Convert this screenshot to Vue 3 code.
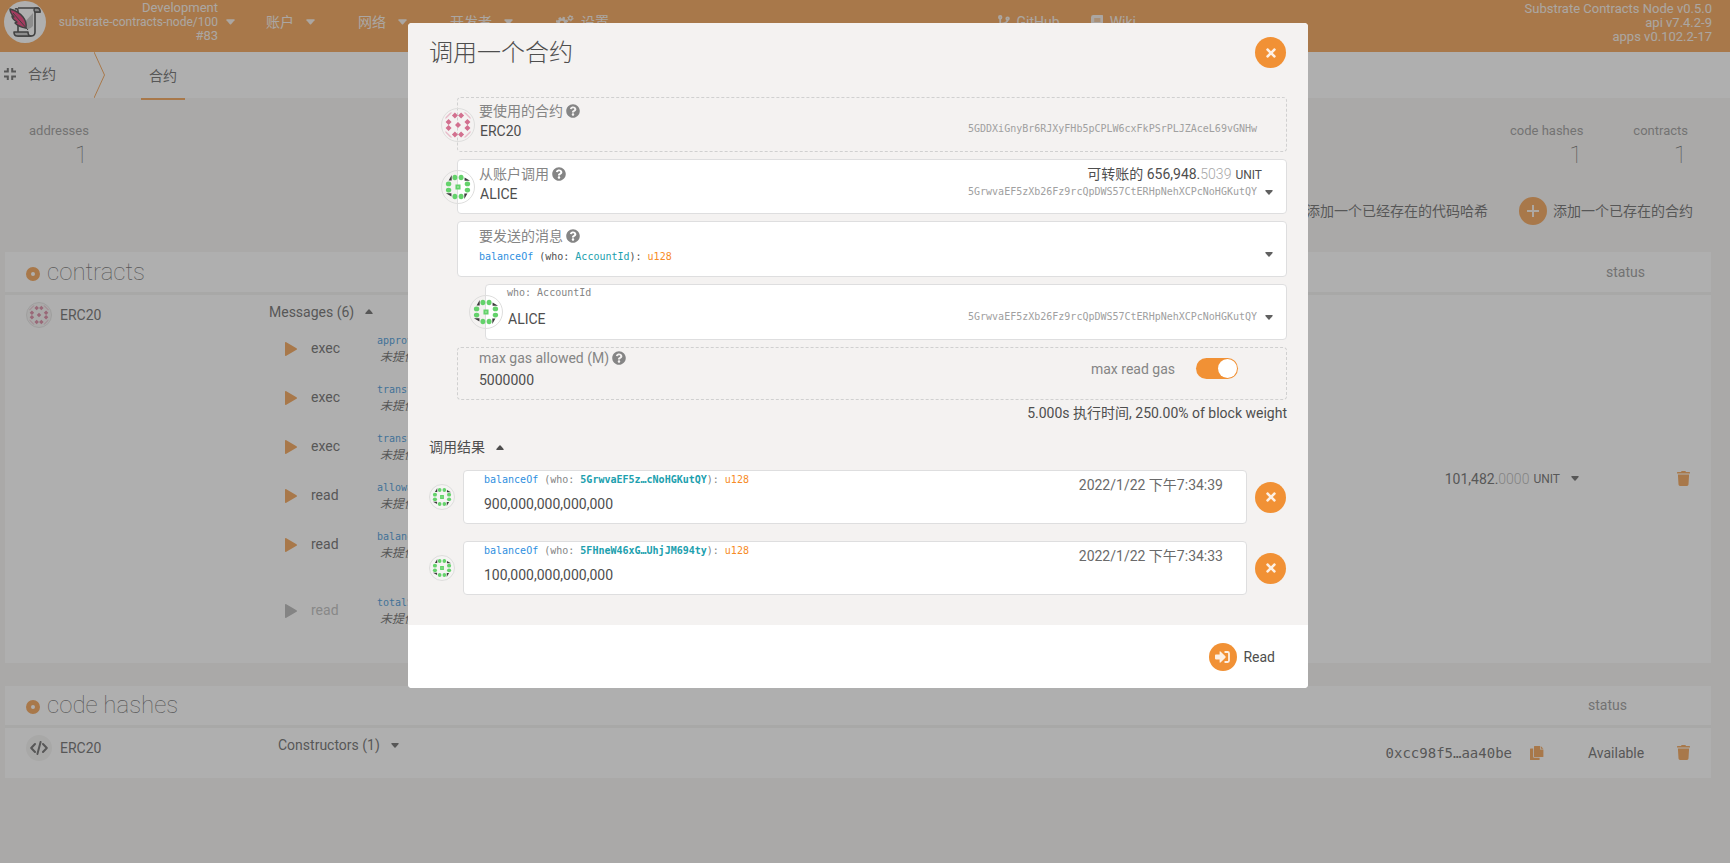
<script setup>
import { ref } from 'vue'

const navItems = ['账户', '网络', '开发者']
const messages = [
  { kind: 'exec', name: 'approve' },
  { kind: 'exec', name: 'transfer' },
  { kind: 'exec', name: 'transferFrom' },
  { kind: 'read', name: 'allowance' },
  { kind: 'read', name: 'balanceOf' },
  { kind: 'read', name: 'totalSupply', disabled: true }
]
const results = [
  { who: '5GrwvaEF5z…cNoHGKutQY', value: '900,000,000,000,000', when: '2022/1/22 下午7:34:39' },
  { who: '5FHneW46xG…UhjJM694ty', value: '100,000,000,000,000', when: '2022/1/22 下午7:34:33' }
]
const aliceAddress = '5GrwvaEF5zXb26Fz9rcQpDWS57CtERHpNehXCPcNoHGKutQY'
const contractAddress = '5GDDXiGnyBr6RJXyFHb5pCPLW6cxFkPSrPLJZAceL69vGNHw'
const maxGas = ref('5000000')
const useMaxGas = ref(true)
</script>

<template>
  <div class="app">
    <svg class="sprite" aria-hidden="true">
      <symbol id="caret-down" viewBox="0 0 10 6"><path d="M1 0h8q1 0 .5 1L5.7 5.5q-.7.7-1.4 0L.5 1Q0 0 1 0z" /></symbol>
      <symbol id="caret-up" viewBox="0 0 10 6"><path d="M1 6h8q1 0 .5-1L5.7.5Q5 -.2 4.3.5L.5 5Q0 6 1 6z" /></symbol>
      <symbol id="times" viewBox="0 0 352 512"><path d="M242.72 256l100.07-100.07c12.28-12.28 12.28-32.19 0-44.48l-22.24-22.24c-12.28-12.28-32.19-12.28-44.48 0L176 189.28 75.93 89.21c-12.28-12.28-32.19-12.28-44.48 0L9.21 111.45c-12.28 12.28-12.28 32.19 0 44.48L109.28 256 9.21 356.07c-12.28 12.28-12.28 32.19 0 44.48l22.24 22.24c12.28 12.28 32.2 12.28 44.48 0L176 322.72l100.07 100.07c12.28 12.28 32.2 12.28 44.48 0l22.24-22.24c12.28-12.28 12.28-32.19 0-44.48L242.72 256z" /></symbol>
      <symbol id="question" viewBox="0 0 512 512"><path d="M504 256c0 136.997-111.043 248-248 248S8 392.997 8 256C8 119.083 119.043 8 256 8s248 111.083 248 248zM262.655 90c-54.497 0-89.255 22.957-116.549 63.758-3.536 5.286-2.353 12.415 2.715 16.258l34.699 26.31c5.205 3.947 12.621 3.008 16.665-2.122 17.864-22.658 30.113-35.797 57.303-35.797 20.429 0 45.698 13.148 45.698 32.958 0 14.976-12.363 22.667-32.534 33.976C247.128 238.528 216 254.941 216 296v4c0 6.627 5.373 12 12 12h56c6.627 0 12-5.373 12-12v-1.333c0-28.462 83.186-29.647 83.186-106.667 0-58.002-60.165-102-116.531-102zM256 338c-25.365 0-46 20.635-46 46 0 25.364 20.635 46 46 46s46-20.636 46-46c0-25.365-20.635-46-46-46z" /></symbol>
      <symbol id="trash" viewBox="0 0 13 15"><path d="M0 1.6Q0 1 .6 1H4L4.6 0H8.4L9 1H12.4Q13 1 13 1.6V2.6H0zM.9 3.6H12.1L11.5 13.6Q11.4 15 10 15H3Q1.6 15 1.5 13.6z" /></symbol>
      <symbol id="play" viewBox="0 0 12 14"><path d="M0 1Q0-.4 1.3.3L11.5 6.2Q12.5 7 11.5 7.8L1.3 13.7Q0 14.4 0 13z" /></symbol>
      <symbol id="copy" viewBox="0 0 14 14"><path d="M4.6 0H10V3.4H13.4V10.4Q13.4 11 12.8 11H4.6Q4 11 4 10.4V.6Q4 0 4.6 0zM10.7 0L13.4 2.7H10.7zM3.2 2.6V11Q3.2 11.8 4 11.8H9.6V13.4Q9.6 14 9 14H.6Q0 14 0 13.4V3.2Q0 2.6.6 2.6z" /></symbol>
      <symbol id="code" viewBox="0 0 18 14"><path d="M5 3L1.2 7L5 11M13 3L16.8 7L13 11M10.6 1L7.4 13" fill="none" stroke="currentColor" stroke-width="2" stroke-linecap="round" stroke-linejoin="round" /></symbol>
      <symbol id="sign-in" viewBox="0 0 16 14"><path d="M0 5.4Q0 4.6.8 4.6H4.6V2Q4.6.8 5.5 1.6L10.4 6.3Q11 7 10.4 7.7L5.5 12.4Q4.6 13.2 4.6 12V9.4H.8Q0 9.4 0 8.6z" /><path d="M10.2 2H12.6Q14 2 14 3.4V10.6Q14 12 12.6 12H10.2" fill="none" stroke="currentColor" stroke-width="1.8" stroke-linecap="round" /></symbol>
      <symbol id="branch" viewBox="0 0 12 14"><g fill="none" stroke="currentColor" stroke-width="1.8"><circle cx="2.2" cy="2.2" r="1.3" /><circle cx="9.6" cy="3.6" r="1.3" /><circle cx="2.2" cy="11.8" r="1.3" /><path d="M2.2 3.5V10.5M9.6 5Q9.6 8 2.4 9" /></g></symbol>
      <symbol id="book" viewBox="0 0 12 14"><path fill-rule="evenodd" d="M2.4 0H11.3Q12 0 12 .7V9.6L11.4 10.4V12.4H12V14H2.4Q0 14 0 11.6V2.4Q0 0 2.4 0zM3.2 3.4V4.4H9.4V3.4zM3.2 5.4V6.4H9.4V5.4zM2.4 10.6Q1.6 11.5 2.4 12.4H10.2V10.6z" /></symbol>
      <symbol id="gears" viewBox="0 0 18 15"><g fill="none" stroke="currentColor"><circle cx="6" cy="8" r="3.5" stroke-width="2.6" /><circle cx="6" cy="8" r="5.3" stroke-width="1.8" stroke-dasharray="2.4 1.76" /><circle cx="14.4" cy="3.2" r="1.8" stroke-width="1.3" /><circle cx="14.4" cy="3.2" r="2.7" stroke-width="1" stroke-dasharray="1.4 1.4" /><circle cx="14.4" cy="12" r="1.8" stroke-width="1.3" /><circle cx="14.4" cy="12" r="2.7" stroke-width="1" stroke-dasharray="1.4 1.4" /></g></symbol>
      <symbol id="compress" viewBox="0 0 12 12"><path d="M0 3.6H3.8V0M8.2 0V3.6H12M12 8.4H8.2V12M3.8 12V8.4H0" fill="none" stroke="currentColor" stroke-width="2" /></symbol>
      <symbol id="alice" viewBox="-17 -17 34 34">
        <g id="alice-side">
          <path d="M-6.7 -12.8V-7H-10z" fill="#3c3c3c" />
          <ellipse cx="-3.3" cy="-10" rx="2.6" ry="2.9" fill="#64d26b" />
          <ellipse cx="3.3" cy="-10" rx="2.6" ry="2.9" fill="#64d26b" />
        </g>
        <use href="#alice-side" transform="rotate(90)" />
        <use href="#alice-side" transform="rotate(180)" />
        <use href="#alice-side" transform="rotate(270)" />
        <path d="M-1.7-1.7H1.7V1.7H-1.7z" fill="#b2e8b5" stroke="#64d26b" stroke-width="2" />
      </symbol>
      <symbol id="erc" viewBox="-17 -17 34 34">
        <g id="erc-side" fill="#d2708f">
          <path d="M-13.3-8.2L-8.2-13.3H-6L-13.3-6z" fill="#e8bcca" />
          <path d="M-3.3-13.2L-.1-10L-3.3-6.8L-6.5-10zM3.3-13.2L6.5-10L3.3-6.8L.1-10z" />
        </g>
        <use href="#erc-side" transform="rotate(90)" />
        <use href="#erc-side" transform="rotate(180)" />
        <use href="#erc-side" transform="rotate(270)" />
        <path d="M0-3.2L3.2 0L0 3.2L-3.2 0z" fill="#d2708f" />
      </symbol>
    </svg>

    <header class="topbar">
      <button class="chain" type="button">
        <svg class="logo" viewBox="0 0 42 42" aria-hidden="true">
          <circle cx="21" cy="21" r="21" fill="#fff" />
          <path d="M14 7H33Q36 7 36 11H31V31Q31 35 27 35H14V10Q14 7 11 8" fill="#fff" stroke="#222" stroke-width="1.6" stroke-linejoin="round" />
          <path d="M10 31H24Q24 35 27 35H13Q10 35 10 31z" fill="#bbb" stroke="#222" stroke-width="1.6" stroke-linejoin="round" />
          <path d="M31 7Q29 9 31 11H36Q36 7 33 7z" fill="#aaa" stroke="#222" stroke-width="1.4" />
          <path d="M18 24L29 12V25Q25 30 20 27z" fill="#bbb" />
          <path d="M6 8Q14 10 19 16Q23 21 22 27Q15 26 11 22L13 21Q8 18 8 15L10 16Q6 12 6 8z" fill="#e6165f" stroke="#222" stroke-width="1.4" stroke-linejoin="round" />
          <path d="M9 12L24 29" stroke="#222" stroke-width="1" />
        </svg>
        <span class="chain-text"><span>Development</span><span class="spec">substrate-contracts-node/100</span><span>#83</span></span>
        <svg class="caret" aria-hidden="true"><use href="#caret-down" /></svg>
      </button>
      <nav class="menu">
        <button v-for="item in navItems" :key="item" type="button">{{ item }}<svg class="caret" aria-hidden="true"><use href="#caret-down" /></svg></button>
        <a href="#settings"><svg class="gears" aria-hidden="true"><use href="#gears" /></svg>设置</a>
      </nav>
      <nav class="links">
        <a href="#github"><svg class="small-icon" aria-hidden="true"><use href="#branch" /></svg>GitHub</a>
        <a href="#wiki"><svg class="small-icon" aria-hidden="true"><use href="#book" /></svg>Wiki</a>
      </nav>
      <div class="versions"><span>Substrate Contracts Node v0.5.0</span><span>api v7.4.2-9</span><span>apps v0.102.2-17</span></div>
    </header>

    <nav class="tabs">
      <span class="section"><svg class="compress" aria-hidden="true"><use href="#compress" /></svg>合约</span>
      <svg class="divider" viewBox="0 0 11 46" aria-hidden="true"><path d="M0 0L10.5 23L0 46" /></svg>
      <a class="tab" href="#contracts">合约</a>
    </nav>

    <main>
      <section class="summary">
        <dl><dt>addresses</dt><dd>1</dd></dl>
        <div class="summary-right">
          <dl><dt>code hashes</dt><dd>1</dd></dl>
          <dl><dt>contracts</dt><dd>1</dd></dl>
        </div>
      </section>

      <div class="actions">
        <button class="action" type="button"><span class="round plus"></span>添加一个已经存在的代码哈希</button>
        <button class="action" type="button"><span class="round plus"></span>添加一个已存在的合约</button>
      </div>

      <table class="panel contracts">
        <colgroup><col class="c-name"><col><col class="c-value"><col class="c-status"><col class="c-act"></colgroup>
        <thead>
          <tr><th colspan="3"><h1>contracts</h1></th><th class="status">status</th><td></td></tr>
        </thead>
        <tbody>
          <tr>
            <td class="top"><div class="name"><svg class="ident" aria-hidden="true"><use href="#erc" /></svg>ERC20</div></td>
            <td class="top">
              <button class="expander" type="button">Messages (6)<svg class="caret" aria-hidden="true"><use href="#caret-up" /></svg></button>
              <ul class="messages">
                <li v-for="m in messages" :key="m.name" :class="{ off: m.disabled }">
                  <button type="button" class="run" :disabled="m.disabled"><svg class="play" aria-hidden="true"><use href="#play" /></svg>{{ m.kind }}</button>
                  <div class="doc"><code>{{ m.name }}</code><i>未提供文档</i></div>
                </li>
              </ul>
            </td>
            <td><div class="balance">101,482.<span class="faint">0000</span><small>UNIT</small><svg class="caret" aria-hidden="true"><use href="#caret-down" /></svg></div></td>
            <td></td>
            <td><button class="icon" type="button" aria-label="Forget contract"><svg class="trash" aria-hidden="true"><use href="#trash" /></svg></button></td>
          </tr>
        </tbody>
      </table>

      <table class="panel hashes">
        <colgroup><col class="c-name"><col><col class="c-value"><col class="c-status"><col class="c-act"></colgroup>
        <thead>
          <tr><th colspan="3"><h1>code hashes</h1></th><th>status</th><td></td></tr>
        </thead>
        <tbody>
          <tr>
            <td class="top"><div class="name"><span class="code-badge"><svg class="code" aria-hidden="true"><use href="#code" /></svg></span>ERC20</div></td>
            <td class="top"><button class="expander" type="button">Constructors (1)<svg class="caret" aria-hidden="true"><use href="#caret-down" /></svg></button></td>
            <td><div class="hash">0xcc98f5…aa40be<button class="icon" type="button" aria-label="Copy hash"><svg class="copy" aria-hidden="true"><use href="#copy" /></svg></button></div></td>
            <td>Available</td>
            <td><button class="icon" type="button" aria-label="Forget code"><svg class="trash" aria-hidden="true"><use href="#trash" /></svg></button></td>
          </tr>
        </tbody>
      </table>
    </main>

    <div class="overlay">
      <div class="modal" role="dialog" aria-labelledby="modal-title">
        <div class="modal-body">
          <div class="modal-head">
            <h2 id="modal-title">调用一个合约</h2>
            <button class="close" type="button" aria-label="Close"><svg aria-hidden="true"><use href="#times" /></svg></button>
          </div>

          <div class="fields">
            <div class="field dashed">
              <svg class="ident big" aria-hidden="true"><use href="#erc" /></svg>
              <div class="main">
                <label for="contract">要使用的合约<svg class="help" aria-hidden="true"><use href="#question" /></svg></label>
                <input id="contract" class="who" value="ERC20" readonly>
              </div>
              <div class="side"><span class="free"></span><span class="address">{{ contractAddress }}</span></div>
              <span class="slot"></span>
            </div>

            <div class="field">
              <svg class="ident big" aria-hidden="true"><use href="#alice" /></svg>
              <div class="main">
                <label for="from">从账户调用<svg class="help" aria-hidden="true"><use href="#question" /></svg></label>
                <select id="from" class="who"><option>ALICE</option></select>
              </div>
              <div class="side">
                <span class="free">可转账的 656,948.<span class="faint">5039</span><small>UNIT</small></span>
                <span class="address">{{ aliceAddress }}</span>
              </div>
              <span class="slot"><svg aria-hidden="true"><use href="#caret-down" /></svg></span>
            </div>

            <div class="field">
              <div class="main">
                <label for="message">要发送的消息<svg class="help" aria-hidden="true"><use href="#question" /></svg></label>
                <button id="message" class="signature" type="button" aria-haspopup="listbox"><span class="fn">balanceOf</span> (who: <span class="type">AccountId</span>): <span class="ret">u128</span></button>
              </div>
              <span class="slot"><svg aria-hidden="true"><use href="#caret-down" /></svg></span>
            </div>

            <div class="field nested">
              <svg class="ident big" aria-hidden="true"><use href="#alice" /></svg>
              <div class="main">
                <label for="who" class="param">who: AccountId</label>
                <select id="who" class="who"><option>ALICE</option></select>
              </div>
              <div class="side"><span class="free"></span><span class="address">{{ aliceAddress }}</span></div>
              <span class="slot"><svg aria-hidden="true"><use href="#caret-down" /></svg></span>
            </div>

            <div class="field dashed gas">
              <div class="main">
                <label for="gas">max gas allowed (M)<svg class="help" aria-hidden="true"><use href="#question" /></svg></label>
                <input id="gas" v-model="maxGas">
              </div>
              <label class="toggle">max read gas<input v-model="useMaxGas" type="checkbox"></label>
            </div>
          </div>

          <p class="weight">5.000s 执行时间, 250.00% of block weight</p>

          <button class="expander results-title" type="button">调用结果<svg class="caret" aria-hidden="true"><use href="#caret-up" /></svg></button>

          <div class="results">
            <div v-for="r in results" :key="r.when" class="result">
              <svg class="ident" aria-hidden="true"><use href="#alice" /></svg>
              <div class="result-box">
                <div>
                  <div class="call"><span class="fn">balanceOf</span> (who: <b class="type">{{ r.who }}</b>): <span class="ret">u128</span></div>
                  <output>{{ r.value }}</output>
                </div>
                <time>{{ r.when }}</time>
              </div>
              <button class="close" type="button" aria-label="Remove result"><svg aria-hidden="true"><use href="#times" /></svg></button>
            </div>
          </div>
        </div>
        <div class="modal-foot">
          <button class="action" type="button"><span class="round"><svg class="sign-in" aria-hidden="true"><use href="#sign-in" /></svg></span>Read</button>
        </div>
      </div>
    </div>
  </div>
</template>

<style>
body { margin: 0; background: #f5f3f1; }
</style>

<style scoped>
.app {
  --orange: #f19135;
  --mono: "DejaVu Sans Mono", "Noto Sans CJK SC", monospace;
  min-height: 100vh;
  background: #f5f3f1;
  color: #4e4e4e;
  font: 14px/20px Roboto, "Noto Sans CJK SC", sans-serif;
}
.app *, .app *::before { box-sizing: border-box; }
.sprite { position: absolute; width: 0; height: 0; }
svg { flex: none; fill: currentColor; }
button, input, select { font: inherit; color: inherit; background: none; border: 0; padding: 0; margin: 0; }
button { cursor: pointer; }
a { color: inherit; text-decoration: none; }
h1, h2, p, dl, dd, ul { margin: 0; padding: 0; }
.caret { width: 8px; height: 5px; }

.topbar { display: flex; align-items: center; height: 52px; padding: 0 18px 8px 4px; background: var(--orange); color: #f6ede4; }
.chain { display: flex; align-items: center; gap: 8px; white-space: nowrap; }
.logo { width: 42px; height: 42px; }
.chain-text, .versions { display: flex; flex-direction: column; align-items: flex-end; font-size: 13px; line-height: 14px; }
.chain-text { min-width: 164px; }
.spec { font-size: 12px; }
.versions { margin-top: 2px; }
.menu { display: flex; align-items: center; gap: 43px; margin-left: 31px; }
.menu button, .menu a, .links a { display: flex; align-items: center; gap: 12px; }
.menu a, .links a { gap: 7px; }
.topbar .caret { width: 9px; height: 6px; }
.gears { width: 18px; height: 15px; }
.links { display: flex; gap: 31px; margin: 0 auto; }
.small-icon { width: 12px; height: 14px; }

.tabs { display: flex; align-items: stretch; height: 46px; padding-left: 4px; background: #fff; }
.section { display: flex; align-items: center; gap: 12px; width: 90px; padding-bottom: 2px; }
.compress { width: 12px; height: 12px; }
.divider { width: 11px; height: 46px; }
.divider path { fill: none; stroke: var(--orange); }
.tab { height: 48px; margin-left: 36px; padding: 14px 8px 0; border-bottom: 2px solid var(--orange); }

.summary, .summary-right { display: flex; justify-content: space-between; }
.summary { padding: 23px 42px 0 29px; }
.summary-right { gap: 50px; }
.summary dt { font-size: 13px; opacity: .66; }
.summary dd { padding-right: 1px; text-align: right; font-size: 24px; line-height: 28px; font-weight: 100; }
.actions { display: flex; justify-content: flex-end; gap: 31px; padding: 28px 37px 27px; }
.action { display: flex; align-items: center; gap: 6px; }
.round { display: flex; align-items: center; justify-content: center; width: 28px; height: 28px; border-radius: 50%; background: var(--orange); color: #fdf0e4; }
.plus { background: linear-gradient(#fdf0e4, #fdf0e4) center / 12px 2px no-repeat, linear-gradient(#fdf0e4, #fdf0e4) center / 2px 12px no-repeat, var(--orange); }
.sign-in { width: 16px; height: 14px; }

.panel { width: calc(100% - 24px); margin: 0 19px 23px 5px; table-layout: fixed; border-collapse: collapse; background: #fff; }
.panel th, .panel td { padding: 0; text-align: left; font-weight: 400; }
.panel thead tr { height: 41px; border-bottom: 3px solid #f1f0ef; }
.panel thead th { color: #858585; }
.panel h1 { display: flex; align-items: center; gap: 7px; padding-left: 21px; font-size: 24px; line-height: 36px; font-weight: 100; color: #4e4e4e; }
.panel h1::before { content: ""; width: 14px; height: 14px; margin-top: 4px; border: 5px solid var(--orange); border-radius: 50%; }
.panel .top { vertical-align: top; padding-top: 7px; }
.c-name { width: 264px; }
.c-value { width: 330px; }
.c-status { width: 56px; }
.c-act { width: 55px; }
.contracts .status { padding-left: 6px; }
.hashes .c-name { width: 273px; }
.hashes .c-status { width: 68px; }
.hashes tbody tr { height: 51px; }
.name { display: flex; align-items: center; gap: 8px; padding-left: 21px; }
.ident { width: 26px; height: 26px; border: 1px solid #dededd; border-radius: 50%; background: #f5f4f3; }
.expander { display: flex; align-items: center; gap: 11px; }
.messages { list-style: none; padding: 10px 0 35px 16px; }
.messages li { display: flex; align-items: center; padding-bottom: 15px; line-height: 17px; }
.messages li.off { padding: 17px 0 0; }
.off .run { color: #b0b0b0; }
.run { display: flex; align-items: center; gap: 14px; width: 92px; }
.play { width: 12px; height: 14px; color: var(--orange); }
.off .play { color: #a8a8a8; }
.doc { display: flex; flex-direction: column; }
.doc code { font: 10px/17px var(--mono); color: #2184d0; }
.doc i { padding-left: 3px; font-size: 12px; }
.balance, .hash { display: flex; align-items: center; justify-content: flex-end; }
.balance { padding-right: 21px; }
.balance .caret { margin-left: 11px; }
.faint { font-weight: 300; opacity: .5; }
small { margin-left: 4px; font-size: 12px; }
.icon { display: flex; color: var(--orange); }
.trash { width: 13px; height: 15px; margin-left: 21px; }
.hash { gap: 18px; padding-right: 44px; font-family: var(--mono); }
.copy { width: 14px; height: 14px; }
.code-badge { display: flex; align-items: center; justify-content: center; width: 26px; height: 26px; border-radius: 50%; background: #f1f0ef; }
.code { width: 18px; height: 14px; }

.overlay { position: fixed; inset: 0; display: flex; justify-content: center; align-items: flex-start; padding: 23px 14px 0 0; background: rgba(96, 96, 96, .5); }
.modal { width: 100%; max-width: 900px; border-radius: 4px; overflow: hidden; background: #fff; }
.modal-body { padding: 14px 21px 30px; background: #f4f2f1; }
.modal-head { display: flex; align-items: center; justify-content: space-between; padding: 0 1px 29px 0; }
.modal-head h2 { padding-top: 2px; font-size: 24px; line-height: 29px; font-weight: 300; color: #4e4e4e; }
.close { display: flex; align-items: center; justify-content: center; width: 31px; height: 31px; border-radius: 50%; background: var(--orange); color: #fdf0e4; }
.close svg { width: 10px; height: 14px; }

.fields { display: flex; flex-direction: column; gap: 7px; padding-left: 28px; }
.field { position: relative; display: flex; align-items: flex-start; padding: 4px 13px 9px 21px; border: 1px solid #dededf; border-radius: 4px; background: #fff; }
.dashed { padding-top: 3px; padding-bottom: 10px; border: 1px dashed #d0d0d0; background: none; }
.nested { margin-left: 28px; padding-bottom: 10px; }
.field > .big { position: absolute; left: -17px; top: 10px; width: 34px; height: 34px; background: none; }
.main { flex: 1; display: flex; flex-direction: column; align-items: flex-start; }
.main label, .toggle { display: flex; align-items: center; gap: 3px; color: #858585; }
.main label.param { margin-bottom: 12px; font: 10px/8px var(--mono); }
.help { width: 14px; height: 14px; }
.main input, .main select { width: 100%; height: 20px; appearance: none; outline: 0; }
.main .who { padding-left: 1px; }
.side { display: flex; flex-direction: column; align-items: flex-end; }
.free { display: block; height: 20px; }
.address { padding-right: 5px; font: 10px/16px var(--mono); color: #a0a0a0; }
.slot { display: flex; width: 8px; margin: 26px 0 0 3px; color: #606060; }
.slot svg { width: 8px; height: 5px; }
.signature { font: 10px/21px var(--mono); }
.fn { color: #2e8fe0; }
.type { color: #20a0ae; }
.ret { color: #f78b26; }
.gas { padding-top: 0; padding-bottom: 9px; }
.gas .main { gap: 2px; }
.toggle { gap: 21px; margin: 10px 35px 0 0; }
.toggle input { display: flex; justify-content: flex-end; width: 42px; height: 21px; padding: 1px; appearance: none; border-radius: 11px; background: #ccc; }
.toggle input::before { content: ""; width: 19px; height: 19px; border-radius: 50%; background: #fff; }
.toggle input:not(:checked) { justify-content: flex-start; }
.toggle input:checked { background: var(--orange); }
.weight { margin-top: 3px; text-align: right; }
.results-title { margin: 14px 0 13px; }
.results { display: flex; flex-direction: column; gap: 17px; }
.result { display: flex; align-items: center; gap: 8px; padding-right: 1px; }
.result-box { flex: 1; display: flex; justify-content: space-between; height: 54px; padding: 2px 23px 0 20px; border: 1px solid #dededf; border-radius: 4px; background: #fff; }
.call { font: 10px/14px var(--mono); color: #858585; }
.result-box output { display: block; margin-top: 7px; }
.result-box time { padding-top: 2px; color: #6a6a6a; }
.modal-foot { display: flex; justify-content: flex-end; padding: 18px 33px 17px; background: #fff; }
</style>
